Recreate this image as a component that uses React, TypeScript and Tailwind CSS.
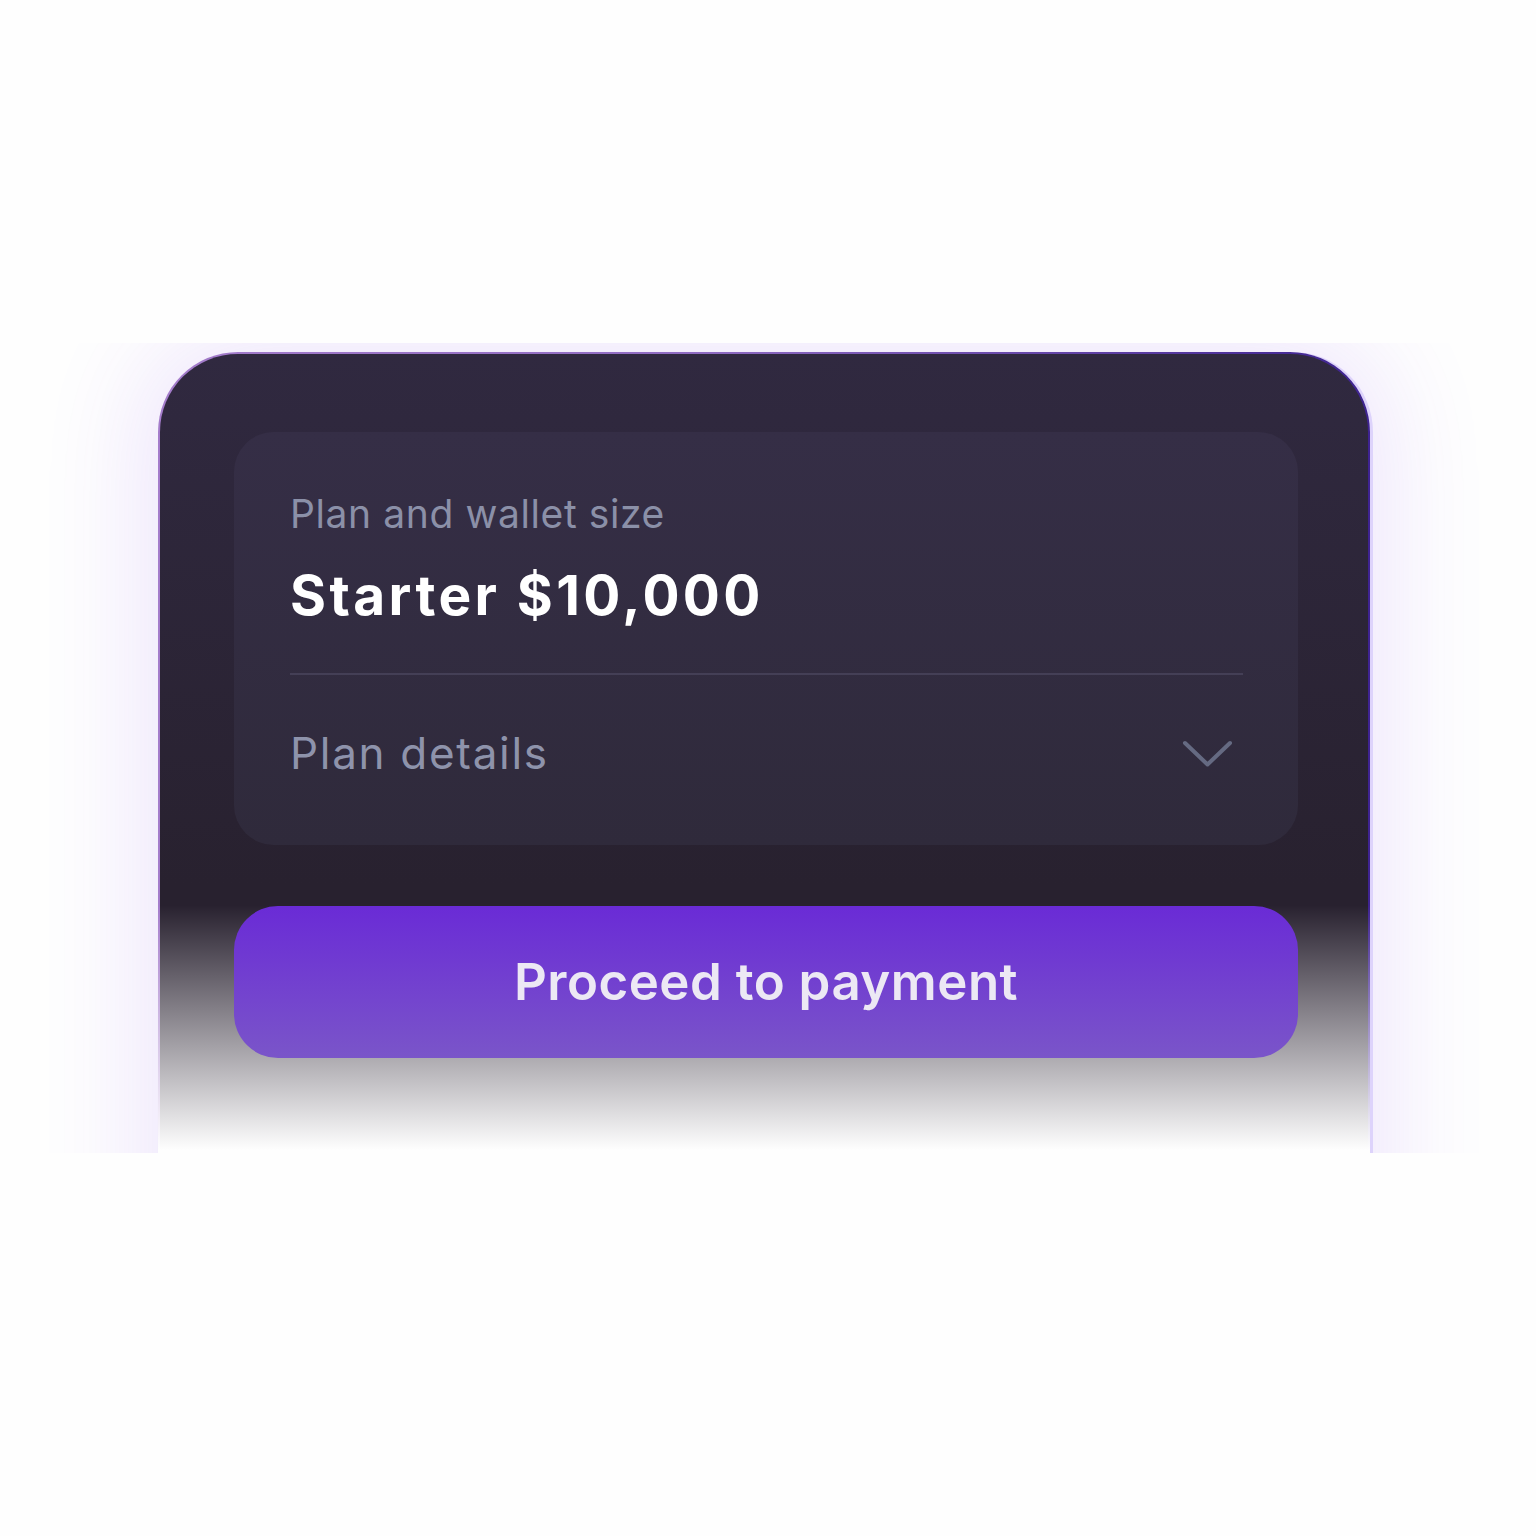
import React from "react";

function Chevron() {
  return (
    <svg width="51" height="28" viewBox="0 0 51 28" fill="none" className="mr-[10px] shrink-0">
      <path d="M3 3 L25.5 24.5 L48 3" stroke="#656a82" strokeWidth="4" strokeLinecap="round" strokeLinejoin="round" />
    </svg>
  );
}

export default function App() {
  return (
    <div className="min-h-screen bg-[#fefefe] pt-[343px] font-['Inter','Noto_Sans',sans-serif]">
      <div className="h-[810px] overflow-hidden pt-[9px] pl-[158px]">
        <div className="relative h-[900px] w-[1212px] rounded-t-[80px] p-[2px] bg-[linear-gradient(to_right,#a47ccb,#8f6bc2_45%,#3e2391)] shadow-[3px_0_0_0_#ddd3fb,0_0_100px_20px_rgba(124,58,237,0.12)]">
          <div className="h-full rounded-t-[78px] bg-[linear-gradient(to_bottom,#302940,#28212f_530px)] pt-[78px] pl-[74px] pr-[70px]">
            <div className="relative z-10 rounded-[40px] bg-[linear-gradient(to_bottom,#352e46,#2f2a3b)] pt-[58px] pb-[65px] pl-[56px] pr-[55px]">
              <div className="text-[39px] leading-[48px] tracking-[0.6px] text-[#8b90a8]">Plan and wallet size</div>
              <div className="mt-[24px] text-[55px] leading-[66px] font-bold tracking-[3.4px] text-white">
                Starter $10,000
              </div>
              <div className="mt-[45px] h-[2px] bg-[#443f56]" />
              <div className="mt-[52px] flex items-center justify-between">
                <span className="text-[44px] leading-[53px] tracking-[1.7px] text-[#8e93ab]">Plan details</span>
                <Chevron />
              </div>
            </div>
            <button className="relative z-10 mt-[61px] flex h-[152px] w-full items-center justify-center rounded-[44px] bg-[linear-gradient(to_bottom,#6a2bd6,#7a55c9)] text-[51px] font-semibold tracking-[0.5px] text-[#ece8f4]">
              Proceed to payment
            </button>
          </div>
          <div className="pointer-events-none absolute left-0 right-0 top-[553px] h-[347px] bg-[linear-gradient(to_bottom,rgba(254,254,254,0)_0px,#fefefe_245px)]" />
        </div>
      </div>
    </div>
  );
}
